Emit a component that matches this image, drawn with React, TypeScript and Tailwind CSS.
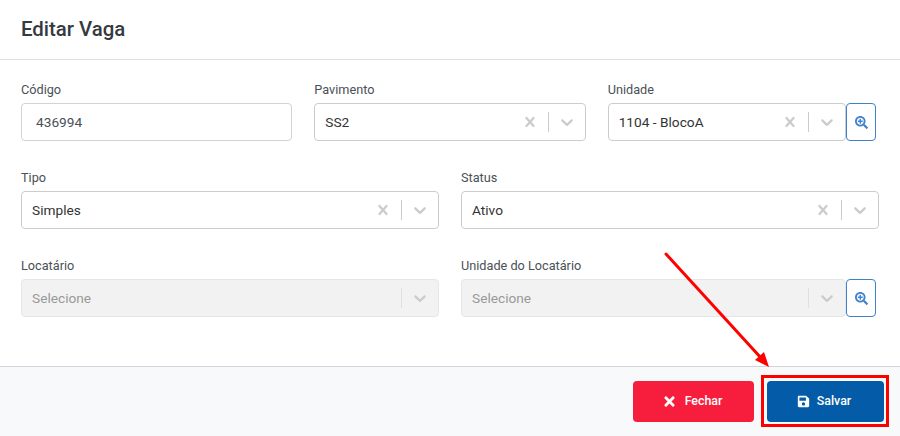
import React from 'react';
import { FaSave, FaSearchPlus, FaTimes } from 'react-icons/fa';

interface SelectProps {
  value?: string;
  placeholder?: string;
  disabled?: boolean;
  clearable?: boolean;
}

const Cross = () => (
  <svg viewBox="0 0 20 20" className="w-5 h-5 fill-[#cccccc]">
    <path d="M14.348 14.849c-0.469 0.469-1.229 0.469-1.697 0l-2.651-3.030-2.651 3.029c-0.469 0.469-1.229 0.469-1.697 0-0.469-0.469-0.469-1.229 0-1.697l2.758-3.15-2.759-3.152c-0.469-0.469-0.469-1.228 0-1.697s1.228-0.469 1.697 0l2.652 3.031 2.651-3.031c0.469-0.469 1.228-0.469 1.697 0s0.469 1.229 0 1.697l-2.758 3.152 2.758 3.15c0.469 0.469 0.469 1.229 0 1.698z" />
  </svg>
);

const Chevron = () => (
  <svg viewBox="0 0 20 20" className="w-5 h-5 fill-[#cccccc]">
    <path d="M4.516 7.548c0.436-0.446 1.043-0.481 1.576 0l3.908 3.747 3.908-3.747c0.533-0.481 1.141-0.446 1.576 0 0.436 0.445 0.408 1.197 0 1.615-0.406 0.418-4.695 4.502-4.695 4.502-0.217 0.223-0.502 0.335-0.789 0.335s-0.572-0.112-0.789-0.335c0 0-4.287-4.084-4.695-4.502s-0.436-1.17 0-1.615z" />
  </svg>
);

const Select: React.FC<SelectProps> = ({ value, placeholder, disabled, clearable = true }) => (
  <div
    className={`flex-1 min-w-0 h-[38px] flex items-center rounded border ${
      disabled ? 'bg-[#f2f2f2] border-[#e6e6e6]' : 'bg-white border-[#cccccc]'
    }`}
  >
    <div className={`flex-1 pl-[10px] text-[13.7px] ${disabled ? 'text-[#999999]' : 'text-[#333333]'}`}>
      {value ?? placeholder}
    </div>
    {clearable && (
      <div className="p-2">
        <Cross />
      </div>
    )}
    <span className={`w-px h-[20px] ${disabled ? 'bg-[#e0e0e0]' : 'bg-[#cccccc]'}`} />
    <div className="p-2">
      <Chevron />
    </div>
  </div>
);

const SearchButton = () => (
  <button className="w-[30px] h-[38px] shrink-0 flex items-center justify-center rounded border border-[#3f82cc] bg-white text-[#3f82cc]">
    <FaSearchPlus className="w-[13px] h-[13px]" />
  </button>
);

const Field: React.FC<{ label: string; children: React.ReactNode }> = ({ label, children }) => (
  <div>
    <label className="block h-[24px] text-[12.7px] leading-[22px] text-[#495057]">{label}</label>
    {children}
  </div>
);

export default function App() {
  return (
    <div
      className="relative w-[900px] h-[436px] overflow-hidden bg-white flex flex-col"
      style={{ fontFamily: '"Roboto", "Inter", sans-serif' }}
    >
      <div className="h-[60px] shrink-0 border-b border-[#dee2e6] px-[21px] flex items-center">
        <h5 className="text-[20.4px] font-medium text-[#343a40]">Editar Vaga</h5>
      </div>

      <div className="flex-1 px-[21px] pt-[19px]">
        <div className="grid grid-cols-3 gap-x-[22px]">
          <Field label="Código">
            <input
              readOnly
              value="436994"
              className="w-full h-[38px] rounded border border-[#ced4da] px-[14px] text-[13.7px] text-[#495057] outline-none"
            />
          </Field>
          <Field label="Pavimento">
            <Select value="SS2" />
          </Field>
          <Field label="Unidade">
            <div className="flex pr-[3px]">
              <Select value="1104 - BlocoA" />
              <SearchButton />
            </div>
          </Field>
        </div>

        <div className="grid grid-cols-2 gap-x-[22px] gap-y-[26px] mt-[26px]">
          <Field label="Tipo">
            <Select value="Simples" />
          </Field>
          <Field label="Status">
            <Select value="Ativo" />
          </Field>
          <Field label="Locatário">
            <Select placeholder="Selecione" disabled clearable={false} />
          </Field>
          <Field label="Unidade do Locatário">
            <div className="flex pr-[3px]">
              <Select placeholder="Selecione" disabled clearable={false} />
              <SearchButton />
            </div>
          </Field>
        </div>
      </div>

      <div className="h-[70px] shrink-0 border-t border-[#ced4da] bg-[#f8f9fa] flex items-center justify-end gap-[13px] pr-[16px]">
        <button className="w-[121px] h-[41px] rounded bg-[#f61e3c] text-white text-[12.4px] font-medium flex items-center justify-center gap-[8px] pr-[3px]">
          <FaTimes className="w-[15px] h-[15px]" />
          Fechar
        </button>
        <button className="w-[117px] h-[41px] rounded bg-[#045ba8] text-white text-[12.4px] font-medium flex items-center justify-center gap-[7px] pr-[3px]">
          <FaSave className="w-[13px] h-[13px]" />
          Salvar
        </button>
      </div>

      {/* anotação por cima do print */}
      <div className="absolute left-[761px] top-[375px] w-[128px] h-[52px] border-[3px] border-[#ff0000] pointer-events-none" />
      <svg className="absolute left-0 top-0 w-[900px] h-[436px] pointer-events-none" viewBox="0 0 900 436">
        <line x1="666" y1="254" x2="762" y2="359" stroke="#ff0000" strokeWidth="3" strokeLinecap="round" />
        <polygon points="769,367 755,360 764,352" fill="#ff0000" />
      </svg>
    </div>
  );
}
